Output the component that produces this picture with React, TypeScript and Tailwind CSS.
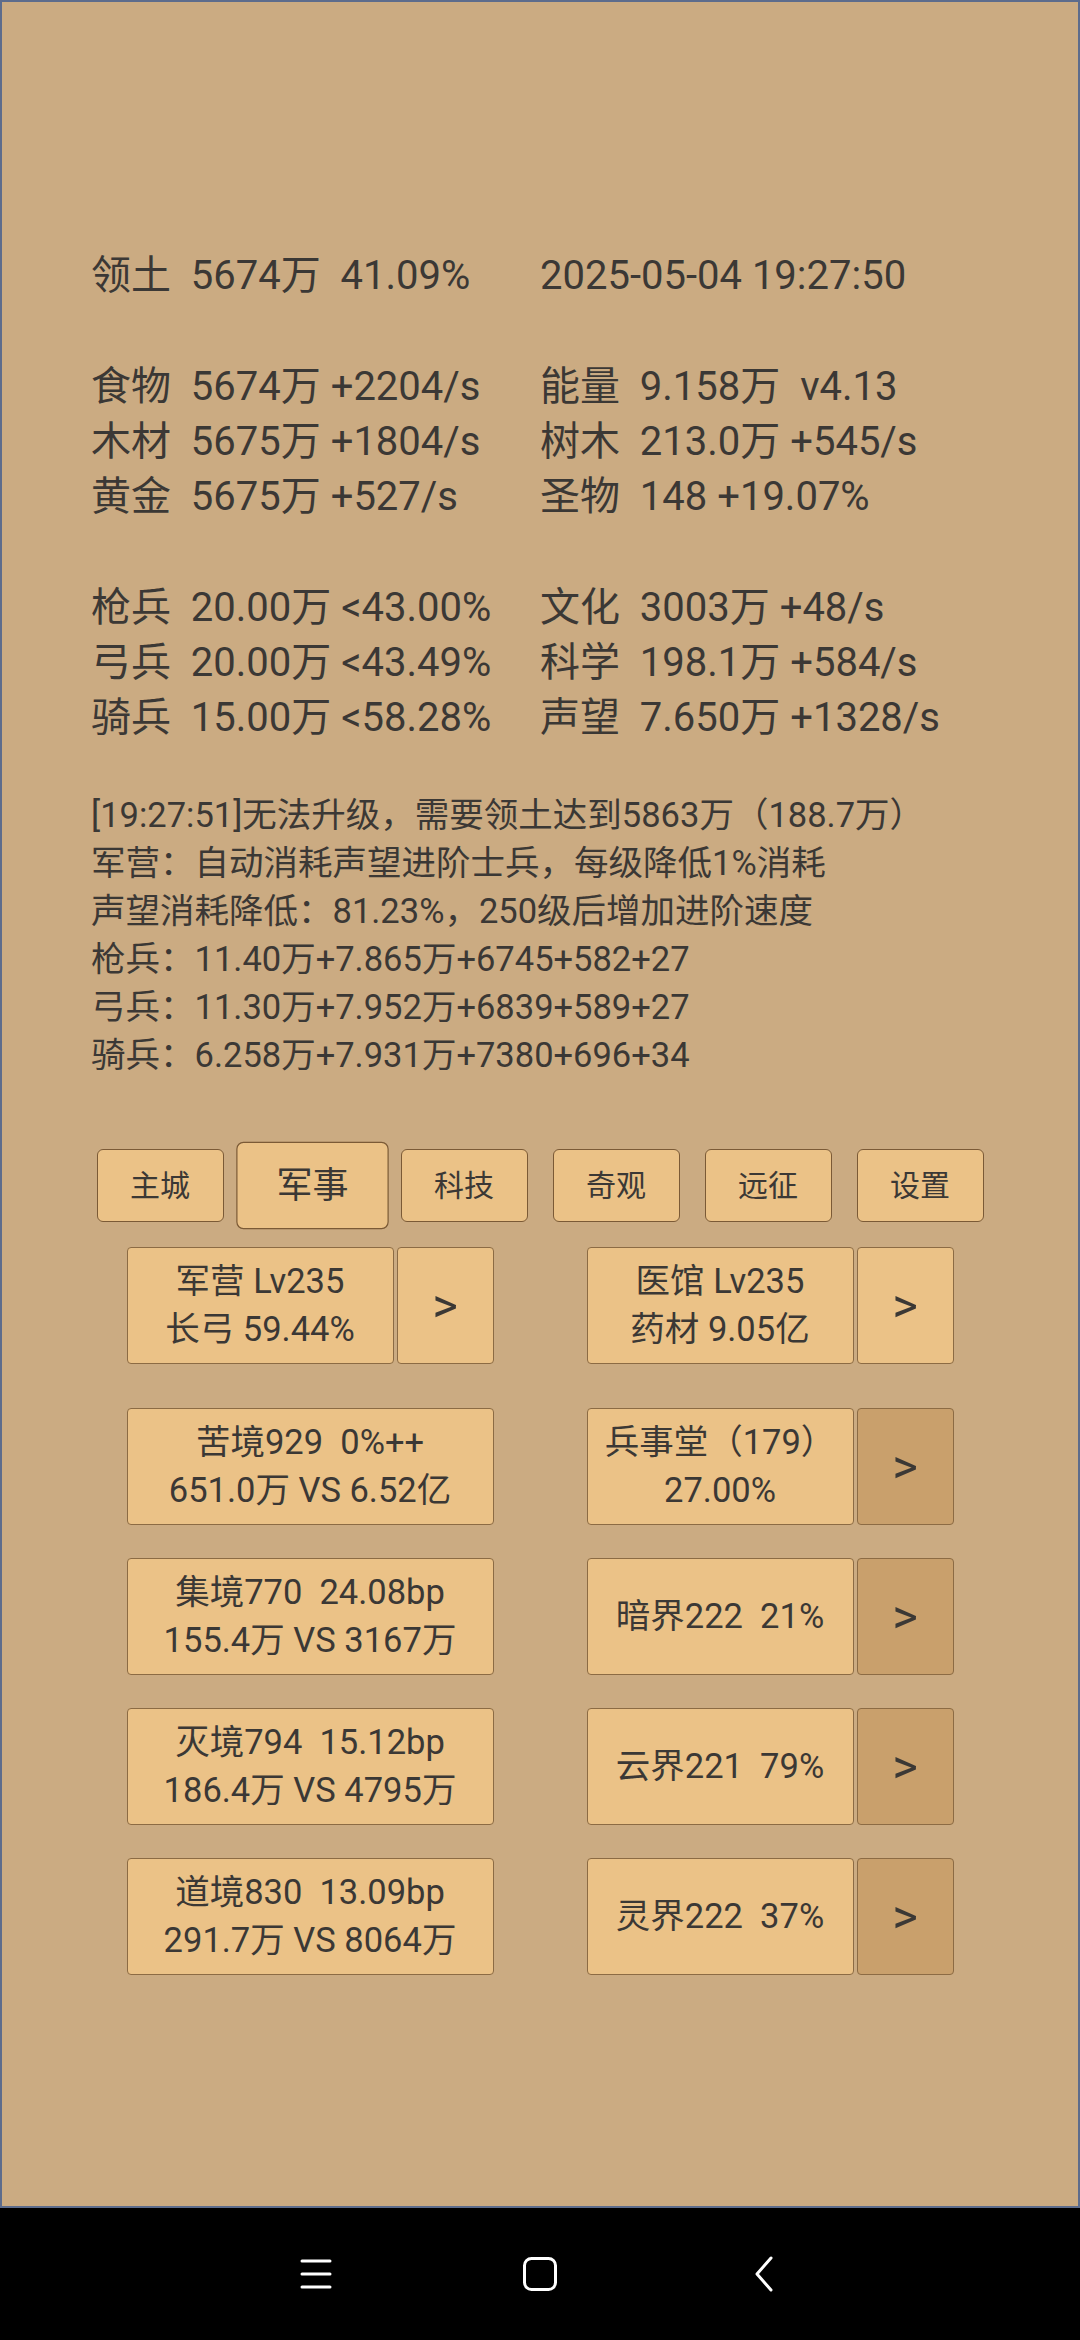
import React from "react";

const mainRows: [string, string][] = [
  ["领土  5674万  41.09%", "2025-05-04 19:27:50"],
  ["", ""],
  ["食物  5674万 +2204/s", "能量  9.158万  v4.13"],
  ["木材  5675万 +1804/s", "树木  213.0万 +545/s"],
  ["黄金  5675万 +527/s", "圣物  148 +19.07%"],
  ["", ""],
  ["枪兵  20.00万 <43.00%", "文化  3003万 +48/s"],
  ["弓兵  20.00万 <43.49%", "科学  198.1万 +584/s"],
  ["骑兵  15.00万 <58.28%", "声望  7.650万 +1328/s"],
];

const logLines = [
  "[19:27:51]无法升级，需要领土达到5863万（188.7万）",
  "军营：自动消耗声望进阶士兵，每级降低1%消耗",
  "声望消耗降低：81.23%，250级后增加进阶速度",
  "枪兵：11.40万+7.865万+6745+582+27",
  "弓兵：11.30万+7.952万+6839+589+27",
  "骑兵：6.258万+7.931万+7380+696+34",
];

const tabs = ["主城", "军事", "科技", "奇观", "远征", "设置"];

function Box({ lines, wide }: { lines: string[]; wide?: boolean }) {
  return (
    <div
      className={
        (wide ? "w-[367px] " : "w-[267px] ") +
        "h-[117px] rounded-[4px] border-[1.5px] border-[#8c6b44] bg-[#ebc287] flex flex-col items-center justify-center text-[34.5px] leading-[48px] whitespace-pre"
      }
    >
      {lines.map((l, i) => (
        <div key={i}>{l}</div>
      ))}
    </div>
  );
}

function Arrow({ dark }: { dark?: boolean }) {
  return (
    <div
      className={
        (dark ? "bg-[#c9a06c] " : "bg-[#ebc287] ") +
        "w-[97px] h-[117px] rounded-[4px] border-[1.5px] border-[#8c6b44] flex items-center justify-center text-[49px] leading-none"
      }
    >
      &gt;
    </div>
  );
}

function Row({
  left,
  leftWide,
  leftArrow,
  right,
  rightDark,
  className,
}: {
  left: string[];
  leftWide?: boolean;
  leftArrow?: boolean;
  right: string[];
  rightDark?: boolean;
  className?: string;
}) {
  return (
    <div className={"flex justify-center gap-[93px] " + (className ?? "")}>
      <div className="flex gap-[3px]">
        <Box lines={left} wide={leftWide} />
        {leftArrow && <Arrow />}
      </div>
      <div className="flex gap-[3px]">
        <Box lines={right} />
        <Arrow dark={rightDark} />
      </div>
    </div>
  );
}

export default function App() {
  return (
    <div className="w-[1080px] h-[2340px] flex flex-col bg-black font-[Roboto,'Noto_Sans_CJK_SC',sans-serif] text-[#3b3835]">
      <div className="h-[2208px] border-2 border-[#5d6c8c] bg-[#cbab82] pt-[246px] pl-[89px]">
        <div className="text-[40px] leading-[55.3px]">
          {mainRows.map(([a, b], i) => (
            <div key={i} className="flex h-[55.3px] whitespace-pre">
              <div className="w-[449px]">{a}</div>
              <div>{b}</div>
            </div>
          ))}
        </div>
        <div className="mt-[45px] text-[34.5px] leading-[48px] whitespace-pre">
          {logLines.map((l, i) => (
            <div key={i} className="h-[48px]">
              {l}
            </div>
          ))}
        </div>
        <div className="-ml-[89px]">
          <div className="mt-[70px] flex justify-center gap-[25px]">
            {tabs.map((t) => (
              <div
                key={t}
                className={
                  (t === "军事" ? "scale-[1.2] " : "") +
                  "w-[127px] h-[73px] rounded-[6px] border-[1.5px] border-[#7b5a36] bg-[#ebc287] flex items-center justify-center text-[30px]"
                }
              >
                {t}
              </div>
            ))}
          </div>
          <Row
            className="mt-[25px]"
            left={["军营 Lv235", "长弓 59.44%"]}
            leftArrow
            right={["医馆 Lv235", "药材 9.05亿"]}
          />
          <Row
            className="mt-[44px]"
            left={["苦境929  0%++", "651.0万 VS 6.52亿"]}
            leftWide
            right={["兵事堂（179）", "27.00%"]}
            rightDark
          />
          <Row
            className="mt-[33px]"
            left={["集境770  24.08bp", "155.4万 VS 3167万"]}
            leftWide
            right={["暗界222  21%"]}
            rightDark
          />
          <Row
            className="mt-[33px]"
            left={["灭境794  15.12bp", "186.4万 VS 4795万"]}
            leftWide
            right={["云界221  79%"]}
            rightDark
          />
          <Row
            className="mt-[33px]"
            left={["道境830  13.09bp", "291.7万 VS 8064万"]}
            leftWide
            right={["灵界222  37%"]}
            rightDark
          />
        </div>
      </div>
      <div className="h-[132px] bg-black flex items-center justify-center">
        <div className="w-[224px] flex justify-center">
          <svg width="34" height="32" viewBox="0 0 34 32" fill="none" stroke="white" strokeWidth="3" strokeLinecap="round">
            <line x1="3" y1="3" x2="31" y2="3" />
            <line x1="3" y1="16" x2="31" y2="16" />
            <line x1="3" y1="29" x2="31" y2="29" />
          </svg>
        </div>
        <div className="w-[224px] flex justify-center">
          <svg width="36" height="36" viewBox="0 0 36 36" fill="none" stroke="white" strokeWidth="3">
            <rect x="2.5" y="2.5" width="31" height="31" rx="7" />
          </svg>
        </div>
        <div className="w-[224px] flex justify-center">
          <svg width="24" height="38" viewBox="0 0 24 38" fill="none" stroke="white" strokeWidth="3" strokeLinecap="round" strokeLinejoin="round">
            <polyline points="19,3 5,19 19,35" />
          </svg>
        </div>
      </div>
    </div>
  );
}
